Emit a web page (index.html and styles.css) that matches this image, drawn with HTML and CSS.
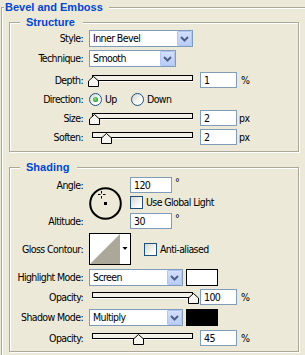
FILE: index.html
```html
<!DOCTYPE html>
<html lang="en">
<head>
    <meta charset="UTF-8">
    <meta name="viewport" content="width=device-width, initial-scale=1.0">
    <title>Bevel and Emboss</title>
    <link rel="stylesheet" href="styles.css">
</head>
<body>
    <fieldset class="panel">
        <legend class="panel-title">Bevel and Emboss</legend>

        <fieldset class="group structure">
            <legend class="group-title">Structure</legend>

            <div class="row h17">
                <span class="lbl">Style:</span>
                <div class="combo w-style"><span>Inner Bevel</span><span class="combo-btn"><svg width="15" height="15" viewBox="0 0 15 15"><polyline points="4,6 7.5,9.5 11,6" fill="none" stroke="#4d6185" stroke-width="2"/></svg></span></div>
            </div>

            <div class="row h17 mt3">
                <span class="lbl">Technique:</span>
                <div class="combo w-tech"><span>Smooth</span><span class="combo-btn"><svg width="15" height="15" viewBox="0 0 15 15"><polyline points="4,6 7.5,9.5 11,6" fill="none" stroke="#4d6185" stroke-width="2"/></svg></span></div>
            </div>

            <div class="row h16 mt5">
                <span class="lbl">Depth:</span>
                <div class="slider"><div class="track"></div><svg class="thumb" style="left: -4px" width="11" height="11" viewBox="0 0 11 11"><polygon points="0.5,10.5 0.5,5 5.5,0.5 10.5,5 10.5,10.5" fill="#f7f6f0" stroke="#000"/></svg></div>
                <input class="num" type="text" value="1">
                <span class="unit">%</span>
            </div>

            <div class="row h13 mt5">
                <span class="lbl">Direction:</span>
                <label class="opt"><span class="radio checked"></span>Up</label>
                <label class="opt"><span class="radio"></span>Down</label>
            </div>

            <div class="row h16 mt4">
                <span class="lbl">Size:</span>
                <div class="slider"><div class="track"></div><svg class="thumb" style="left: -3px" width="11" height="11" viewBox="0 0 11 11"><polygon points="0.5,10.5 0.5,5 5.5,0.5 10.5,5 10.5,10.5" fill="#f7f6f0" stroke="#000"/></svg></div>
                <input class="num" type="text" value="2">
                <span class="unit px">px</span>
            </div>

            <div class="row h16 mt3">
                <span class="lbl">Soften:</span>
                <div class="slider"><div class="track"></div><svg class="thumb" style="left: 9px" width="11" height="11" viewBox="0 0 11 11"><polygon points="0.5,10.5 0.5,5 5.5,0.5 10.5,5 10.5,10.5" fill="#f7f6f0" stroke="#000"/></svg></div>
                <input class="num" type="text" value="2">
                <span class="unit px">px</span>
            </div>
        </fieldset>

        <fieldset class="group shading">
            <legend class="group-title">Shading</legend>

            <div class="angle-grid">
                <span class="lbl angle-lbl">Angle:</span>
                <svg class="dial" width="33" height="33" viewBox="0 0 33 33">
                    <circle cx="16.5" cy="16.5" r="15.3" fill="none" stroke="#000" stroke-width="2"/>
                    <rect x="15" y="15" width="3" height="3" fill="#000"/>
                    <path d="M12.5 4v2.5M12.5 9v2.5M9 7.5h2.5M14 7.5h2.5" stroke="#000" stroke-width="1"/>
                </svg>
                <div class="cell angle-val"><input class="num wide" type="text" value="120"><span class="deg">°</span></div>
                <label class="cell check-row"><span class="check"></span>Use Global Light</label>
                <span class="lbl alt-lbl">Altitude:</span>
                <div class="cell alt-val"><input class="num wide" type="text" value="30"><span class="deg">°</span></div>
            </div>

            <div class="row h32 mt4">
                <span class="lbl">Gloss Contour:</span>
                <svg class="contour" width="42" height="32" viewBox="0 0 42 32">
                    <rect x="0.5" y="0.5" width="41" height="31" fill="#fff" stroke="#000"/>
                    <polygon points="1,31 31,1 31,31" fill="#aca899"/>
                    <polygon points="33.5,14 38.5,14 36,17" fill="#000"/>
                </svg>
                <label class="opt-check"><span class="check"></span>Anti-aliased</label>
            </div>

            <div class="row h17 mt4">
                <span class="lbl">Highlight Mode:</span>
                <div class="combo w-mode"><span>Screen</span><span class="combo-btn"><svg width="15" height="15" viewBox="0 0 15 15"><polyline points="4,6 7.5,9.5 11,6" fill="none" stroke="#4d6185" stroke-width="2"/></svg></span></div>
                <span class="swatch white"></span>
            </div>

            <div class="row h16 mt3">
                <span class="lbl">Opacity:</span>
                <div class="slider"><div class="track"></div><svg class="thumb" style="left: 96px" width="11" height="11" viewBox="0 0 11 11"><polygon points="0.5,10.5 0.5,5 5.5,0.5 10.5,5 10.5,10.5" fill="#f7f6f0" stroke="#000"/></svg></div>
                <input class="num" type="text" value="100">
                <span class="unit">%</span>
            </div>

            <div class="row h17 mt4">
                <span class="lbl">Shadow Mode:</span>
                <div class="combo w-mode"><span>Multiply</span><span class="combo-btn"><svg width="15" height="15" viewBox="0 0 15 15"><polyline points="4,6 7.5,9.5 11,6" fill="none" stroke="#4d6185" stroke-width="2"/></svg></span></div>
                <span class="swatch black"></span>
            </div>

            <div class="row h16 mt4">
                <span class="lbl">Opacity:</span>
                <div class="slider"><div class="track"></div><svg class="thumb" style="left: 41px" width="11" height="11" viewBox="0 0 11 11"><polygon points="0.5,10.5 0.5,5 5.5,0.5 10.5,5 10.5,10.5" fill="#f7f6f0" stroke="#000"/></svg></div>
                <input class="num" type="text" value="45">
                <span class="unit">%</span>
            </div>
        </fieldset>
    </fieldset>
</body>
</html>
```

FILE: styles.css
```css
* { box-sizing: border-box; }
body { margin: 0; background-color: #ece9d8; font-family: "DejaVu Sans Condensed", "Liberation Sans", sans-serif; font-size: 10.5px; letter-spacing: -0.6px; line-height: 13px; color: #000; overflow: hidden; }

/* group boxes: gray line with white etch */
.panel, .group { border: 1px solid #aca899; box-shadow: inset 1px 1px 0 #fff, 1px 1px 0 #fff; }
.panel { margin: 0 0 0 1px; padding: 0 0 12px 2px; width: 330px; min-width: 0; }
.group { margin: 0 0 0 5px; width: 290px; min-width: 0; padding: 0 0 6px 10px; }
.shading { margin-top: 8px; padding-top: 2px; padding-bottom: 5px; }
.panel-title, .group-title { font: bold 11px/15px "Liberation Sans", Arial, sans-serif; letter-spacing: 0; color: #0046d5; background-color: #ece9d8; }
.panel-title { padding: 0 6px 0 1px; }
.group-title { padding: 0 8px 0 6px; }

.row { display: flex; align-items: center; }
.h13 { height: 13px; }
.h16 { height: 16px; }
.h17 { height: 17px; }
.h32 { height: 32px; }
.mt3 { margin-top: 3px; }
.mt4 { margin-top: 4px; }
.mt5 { margin-top: 5px; }

.lbl { width: 69px; padding-right: 6px; display: flex; justify-content: flex-end; white-space: nowrap; flex-shrink: 0; }

/* combo boxes */
.combo { height: 17px; border: 1px solid #7f9db9; background-color: #fff; display: flex; align-items: center; justify-content: space-between; padding-left: 3px; }
.w-style { width: 104px; }
.w-tech { width: 87px; }
.w-mode { width: 94px; }
.combo-btn { width: 15px; height: 15px; background: linear-gradient(#d2defb, #b9cdf7); border: 1px solid #b3c6f3; border-radius: 1px; display: flex; }
.combo-btn svg { margin: -1px; }

/* sliders */
.slider { position: relative; width: 101px; height: 16px; margin-left: 3px; }
.track { height: 6px; margin-top: 3px; border: 1px solid #000; background-color: #f4f2e8; box-shadow: 0 1px 0 #fff; }
.thumb { position: absolute; top: 4px; }

.num { font: inherit; letter-spacing: -0.6px; width: 37px; height: 16px; margin: 0 0 0 7px; padding: 0 0 0 3px; border: 1px solid #7f9db9; background-color: #fff; color: #000; outline: none; }
.num.wide { width: 42px; margin-left: 0; }
.unit { margin-left: 4px; }
.unit.px { margin-left: 2px; }

/* radio and check */
.opt { display: flex; align-items: center; gap: 3px; width: 42px; }
.radio { width: 13px; height: 13px; border-radius: 50%; border: 1px solid #1c5180; background: linear-gradient(135deg, #d6d5cc, #fff 75%); position: relative; flex-shrink: 0; }
.radio.checked::after { content: ""; position: absolute; left: 3px; top: 3px; width: 5px; height: 5px; border-radius: 50%; background: radial-gradient(circle at 40% 40%, #8fe28f, #21a121 70%); }
.check { width: 13px; height: 13px; border: 1px solid #1c5180; background: linear-gradient(135deg, #d6d5cc, #fff 80%); flex-shrink: 0; }
.check-row, .opt-check { display: flex; align-items: center; gap: 3px; }
.opt-check { margin-left: 13px; }

/* shading dial block */
.angle-grid { display: grid; grid-template-columns: 69px 41px auto; grid-template-rows: 16px 14px 16px; row-gap: 3px; }
.angle-lbl { grid-row: 1; grid-column: 1; align-self: center; }
.alt-lbl { grid-row: 3; grid-column: 1; align-self: center; }
.dial { grid-row: 1 / 4; grid-column: 2; align-self: center; margin-top: 1px; }
.cell { grid-column: 3; display: flex; align-items: flex-start; }
.angle-val { grid-row: 1; }
.check-row { grid-row: 2; }
.alt-val { grid-row: 3; }
.deg { margin-left: 3px; line-height: 10px; }

.contour { display: block; }
.swatch { width: 32px; height: 17px; margin-left: 3px; border: 1px solid #000; }
.swatch.white { background-color: #fff; }
.swatch.black { background-color: #000; }
```
